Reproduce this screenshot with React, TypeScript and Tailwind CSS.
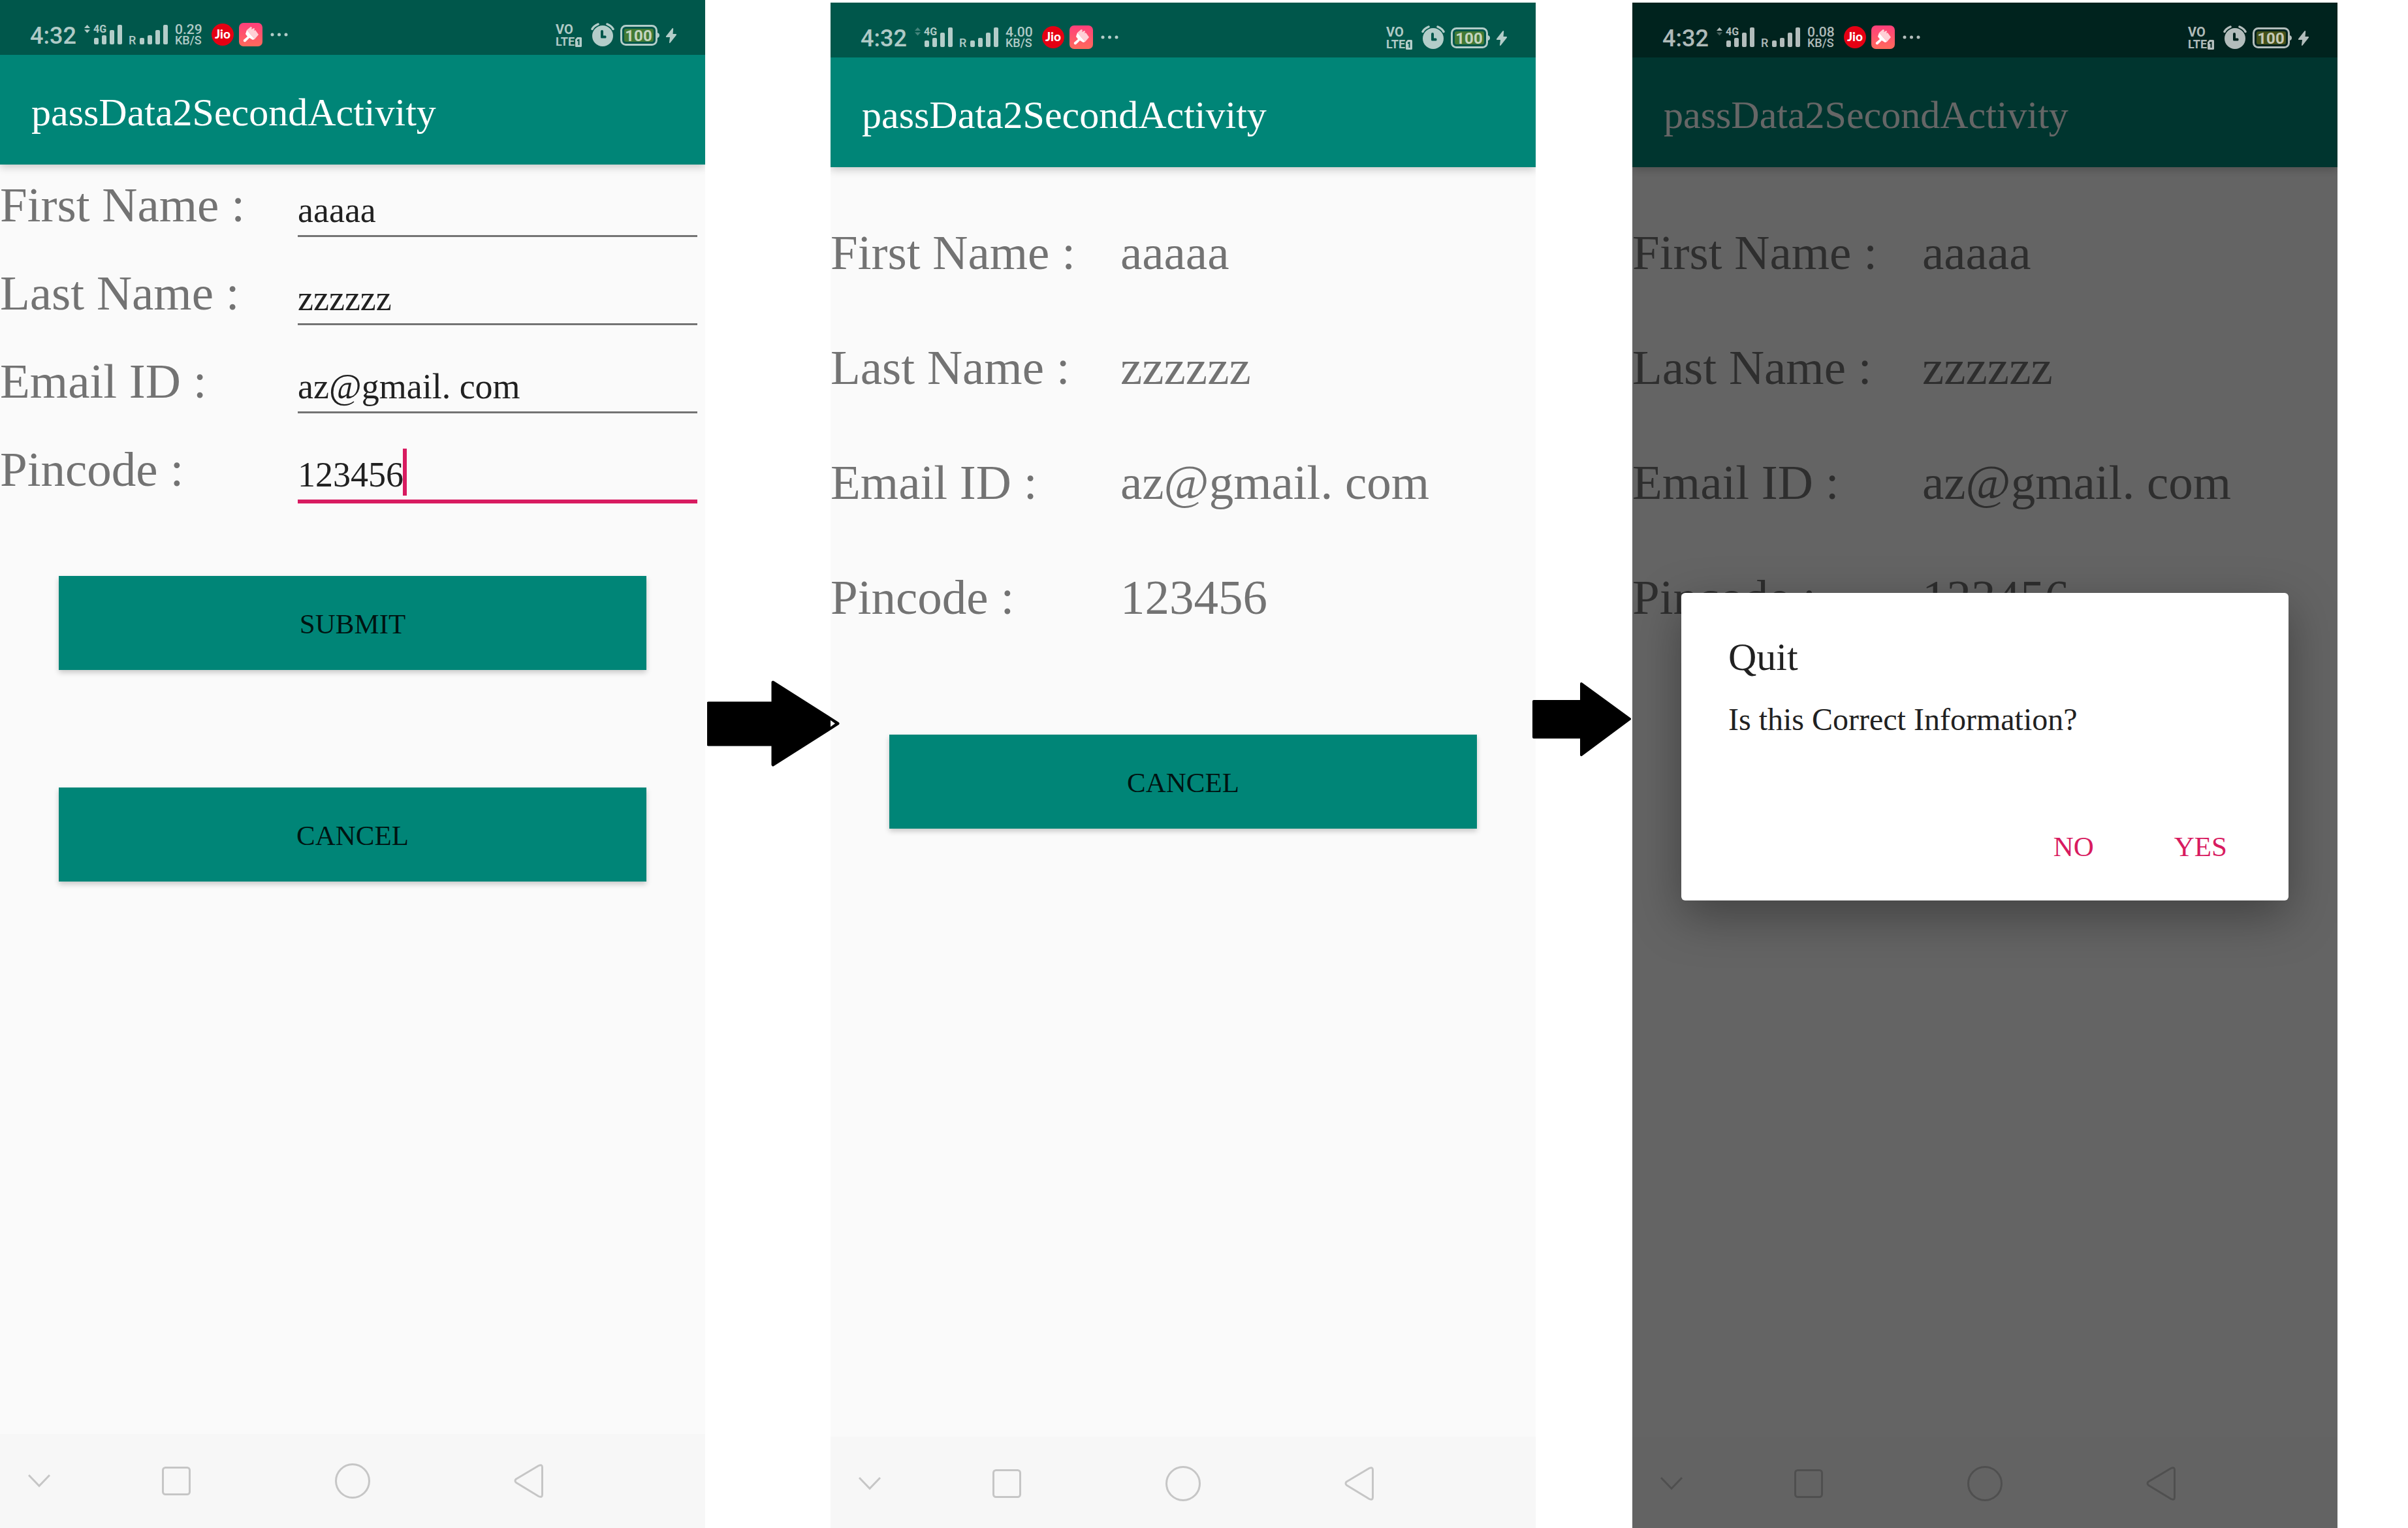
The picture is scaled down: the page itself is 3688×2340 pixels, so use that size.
import type { ReactNode } from "react";

const serif = "font-['Liberation_Serif',serif]";

const bars = [
  { x: 0, y: 20 },
  { x: 12, y: 16 },
  { x: 24, y: 8 },
  { x: 36, y: 0 },
];

function Bars({ offset }: { offset: number }) {
  return (
    <g>
      {bars.map((b) => (
        <rect key={b.x} x={offset + b.x} y={b.y} width="7" height={30 - b.y} rx="2" />
      ))}
    </g>
  );
}

type Traffic = "both" | "up" | "none";

function StatusBar({ speed, traffic, dimmed }: { speed: string; traffic: Traffic; dimmed?: boolean }) {
  return (
    <div
      className={`relative z-20 flex h-[84px] items-start justify-between pr-11 pl-[46px] pt-[35px] font-[Roboto,sans-serif] text-white/70 ${
        dimmed ? "bg-[#00231e]" : "bg-[#00574b]"
      }`}
    >
      <div className="flex h-9 items-center">
        <span className="w-[83px] pt-1 text-[36px] leading-[36px] font-medium">4:32</span>
        <svg className="h-[46px] w-[129px]" viewBox="0 -8 129 46" fill="currentColor" aria-label="Signal">
          <path d="M0 5 4.500 0 9 5z" opacity={traffic === "none" ? 0.4 : 1} />
          <path d="M0 7.500h9l-4.500 5z" opacity={traffic === "both" ? 1 : 0.4} />
          <text x="14" y="12" fontSize="16" fontWeight="700">4G</text>
          <Bars offset={15} />
          <text x="68" y="30" fontSize="18" fontWeight="500">R</text>
          <Bars offset={85} />
        </svg>
        <div className="ml-[10px] w-[56px] font-medium">
          <div className="text-[21px] leading-[18px]">{speed}</div>
          <div className="text-[18px] leading-[16px]">KB/S</div>
        </div>
        <svg className="h-[34px] w-[34px]" viewBox="0 0 34 34" aria-label="Jio">
          <circle cx="17" cy="17" r="17" fill="#e50013" />
          <text x="17" y="23" textAnchor="middle" fontSize="19" fontWeight="900" fill="#fff" fontFamily="Lato, sans-serif">
            Jio
          </text>
        </svg>
        <svg className="ml-2 h-9 w-9" viewBox="0 0 36 36" aria-label="Theme store">
          <defs>
            <linearGradient id={`brush-${speed}`} x1="0" y1="0" x2="0" y2="1">
              <stop offset="0" stopColor="#ff3f7b" />
              <stop offset="1" stopColor="#ff6a5c" />
            </linearGradient>
          </defs>
          <rect width="36" height="36" rx="7" fill={`url(#brush-${speed})`} />
          <path d="m12 11 6-5 2 1-1 3 4-2 1 1-1 3 2-1 5 7-6 7z" fill="#ffd0d6" />
          <path d="m12 11 12 14-3 1-5-3-6 6c-2 1-4-1-3-3l6-5-3-4z" fill="#fff" />
        </svg>
        <svg className="ml-3 h-[6px] w-[27px]" viewBox="0 0 27 6" fill="currentColor" aria-label="More">
          <circle cx="3" cy="3" r="2.500" />
          <circle cx="13.500" cy="3" r="2.500" />
          <circle cx="24" cy="3" r="2.500" />
        </svg>
      </div>
      <div className="flex h-[37px] items-start">
        <div className="w-[42px] font-bold">
          <div className="text-[20px] leading-[20px]">VO</div>
          <div className="flex items-end text-[18px] leading-[18px]">
            LTE
            <svg className="h-4 w-[11px] flex-none" viewBox="0 0 11 16" fill="currentColor" aria-label="SIM 1">
              <path
                fillRule="evenodd"
                d="M4 0h5.500a1.500 1.500 0 0 1 1.500 1.500v12a1.500 1.500 0 0 1-1.500 1.500h-7a1.500 1.500 0 0 1-1.500-1.500V3.500zM4 4v2h1.500v6h2v-9h-1.500z"
              />
            </svg>
          </div>
        </div>
        <svg className="ml-3 h-9 w-9" viewBox="0 0 36 36" aria-label="Alarm">
          <path d="M2 9.500Q4 5 11 2M34 9.500Q32 5 25 2" fill="none" stroke="currentColor" strokeWidth="3.500" strokeLinecap="round" />
          <path
            fillRule="evenodd"
            fill="currentColor"
            d="M18 4a16 16 0 1 1 0 32a16 16 0 1 1 0-32zM17 11q-2 0-2 2v9q0 1.500 1.500 1.500H22q1.500 0 1.500-1.500V21q0-1.500-1.500-1.500h-3V13q0-2-2-2z"
          />
        </svg>
        <svg className="mt-[3px] ml-[9px] h-8 w-[60px]" viewBox="0 0 60 32" aria-label="Battery">
          <rect x="1.500" y="1.500" width="54" height="29" rx="7" fill="none" stroke="currentColor" strokeWidth="3" />
          <path d="M57 12q3 1 3 4t-3 4z" fill="currentColor" />
          <rect x="6" y="6" width="45" height="20" rx="3" fill={dimmed ? "#445119" : "#427a34"} />
          <text x="28" y="24.500" textAnchor="middle" fontSize="24" fontWeight="700" fill="currentColor">100</text>
        </svg>
        <svg className="mt-2 ml-[10px] h-[23px] w-4" viewBox="0 0 16 23" fill="currentColor" aria-label="Charging">
          <path d="M9.500.500 0 12.500q-.500 1.500 1 1.500h5L5 22q0 1.500 1.500.500L16 10.500q.300-1.500-1-1.500h-4.500l.700-8q-.700-1.500-1.700-.500z" />
        </svg>
      </div>
    </div>
  );
}

function NavBar({ inset }: { inset?: boolean }) {
  return (
    <nav
      className={`grid grid-cols-[120fr_300fr_240fr_300fr_120fr] items-center justify-items-center bg-[#f7f7f7] text-[#c6c6c6] ${
        inset ? "h-[140px] pt-1" : "h-36"
      }`}
    >
      <button type="button" aria-label="Hide navigation">
        <svg className="h-5 w-[34px]" viewBox="0 0 34 20" fill="none" stroke="currentColor" strokeWidth="3">
          <path d="m1 1 16 16.500L33 1" />
        </svg>
      </button>
      <button type="button" aria-label="Recent apps">
        <svg className="h-11 w-11" viewBox="0 0 44 44" fill="none" stroke="currentColor" strokeWidth="3">
          <rect x="1.500" y="1.500" width="41" height="41" rx="4" />
        </svg>
      </button>
      <button type="button" aria-label="Home">
        <svg className="h-[54px] w-[54px]" viewBox="0 0 54 54" fill="none" stroke="currentColor" strokeWidth="3">
          <circle cx="27" cy="27" r="25.500" />
        </svg>
      </button>
      <button type="button" aria-label="Back">
        <svg className="h-[52px] w-[46px]" viewBox="0 0 46 52" fill="none" stroke="currentColor" strokeWidth="3" strokeLinejoin="round">
          <path d="M38 2.500 3.500 23q-3 2.500 0 5.500L38 49.500q5.500 2.500 5.500-2.500V5q0-5-5.500-2.500z" />
        </svg>
      </button>
    </nav>
  );
}

interface PhoneProps {
  speed: string;
  traffic: Traffic;
  inset?: boolean;
  dialog?: ReactNode;
  children: ReactNode;
}

function Phone({ speed, traffic, inset, dialog, children }: PhoneProps) {
  return (
    <section className={`relative flex flex-col overflow-hidden bg-[#fafafa] ${inset ? "mt-1" : ""}`}>
      <StatusBar speed={speed} traffic={traffic} dimmed={Boolean(dialog)} />
      <header className="flex h-[168px] items-center bg-[#008577] px-12 pt-2 shadow-[0_4px_12px_rgba(0,0,0,0.2)]">
        <h1 className="text-[60px] leading-[72px] text-white">passData2SecondActivity</h1>
      </header>
      <main className="flex-1">{children}</main>
      <NavBar inset={inset} />
      {dialog && <div className="absolute inset-0 z-10 bg-black/60 px-[75px] pt-[904px]">{dialog}</div>}
    </section>
  );
}

function ActionButton({ children }: { children: string }) {
  return (
    <button
      type="button"
      className="block h-36 w-full bg-[#008577] pt-1 text-[43px] text-black/85 shadow-[0_4px_8px_rgba(0,0,0,0.2)]"
    >
      {children}
    </button>
  );
}

const fields = [
  { id: "first-name", label: "First Name :", value: "aaaaa" },
  { id: "last-name", label: "Last Name :", value: "zzzzzz" },
  { id: "email", label: "Email ID :", value: "az@gmail. com" },
  { id: "pincode", label: "Pincode :", value: "123456" },
];

function EntryForm() {
  return (
    <form>
      {fields.map((f) => {
        const focused = f.id === "pincode";
        return (
          <div key={f.id} className="flex h-[135px] items-start pr-3">
            <label htmlFor={f.id} className="w-[456px] flex-none text-[75px] leading-[124px] text-[#737373]">
              {f.label}
            </label>
            <div className="relative flex-1">
              <input
                id={f.id}
                type="text"
                defaultValue={f.value}
                className={`block w-full bg-transparent pt-8 text-[54px] leading-[76px] text-[#212121] outline-none ${
                  focused ? "h-[114px] border-b-[6px] border-[#d81b60]" : "h-[111px] border-b-[3px] border-[#737373]"
                }`}
              />
              {focused && <span className="absolute top-[30px] left-[161px] h-[72px] w-[6px] bg-[#d81b60]" />}
            </div>
          </div>
        );
      })}
      <div className="flex flex-col gap-[180px] px-[90px] pt-[90px]">
        <ActionButton>SUBMIT</ActionButton>
        <ActionButton>CANCEL</ActionButton>
      </div>
    </form>
  );
}

function Summary() {
  return (
    <>
      <dl className="pt-[43px] text-[75px] leading-[176px] text-[#737373]">
        {fields.map((f) => (
          <div key={f.id} className="flex">
            <dt className="w-[444px] flex-none">{f.label}</dt>
            <dd>{f.value}</dd>
          </div>
        ))}
      </dl>
      <div className="px-[90px] pt-[122px]">
        <ActionButton>CANCEL</ActionButton>
      </div>
    </>
  );
}

function QuitDialog() {
  return (
    <div
      role="dialog"
      aria-labelledby="quit-title"
      className="rounded-md bg-white pt-[62px] pb-7 shadow-[0_24px_72px_rgba(0,0,0,0.35)]"
    >
      <h2 id="quit-title" className="px-[72px] text-[60px] leading-[72px] text-[#212121]">
        Quit
      </h2>
      <p className="mt-[30px] px-[72px] text-[48px] leading-[60px] text-[#212121]">Is this Correct Information?</p>
      <div className="mt-[111px] flex justify-end gap-[75px] pr-[70px] text-[43px] text-[#d81b60]">
        <button type="button" className="h-[108px] px-6">NO</button>
        <button type="button" className="h-[108px] px-6">YES</button>
      </div>
    </div>
  );
}

export default function App() {
  return (
    <div
      className={`grid min-h-screen grid-cols-[minmax(0,1080fr)_minmax(0,192fr)_minmax(0,1080fr)_minmax(0,148fr)_minmax(0,1080fr)_minmax(0,108fr)] bg-white ${serif}`}
    >
      <Phone speed="0.29" traffic="both">
        <EntryForm />
      </Phone>
      <div className="relative z-30 pt-[1042px] pl-[3px]">
        <svg className="h-[132px] w-[203px] max-w-none" viewBox="0 0 203 132" aria-hidden="true">
          <path
            d="M2 35H101V3L200 66 101 129V98H2z"
            fill="#000"
            stroke="#000"
            strokeWidth="5"
            strokeLinejoin="round"
          />
          <path d="M189 61v10l7-5z" fill="#fafafa" />
        </svg>
      </div>
      <Phone speed="4.00" traffic="none" inset>
        <Summary />
      </Phone>
      <div className="relative z-30 -ml-[5px] pt-[1045px]">
        <svg className="h-[113px] w-[151px] max-w-none" viewBox="0 0 151 113" aria-hidden="true">
          <path d="M2 29H75V2L149 56 75 111V84H2z" fill="#000" stroke="#000" strokeWidth="4" strokeLinejoin="round" />
        </svg>
      </div>
      <Phone speed="0.08" traffic="up" inset dialog={<QuitDialog />}>
        <Summary />
      </Phone>
    </div>
  );
}
